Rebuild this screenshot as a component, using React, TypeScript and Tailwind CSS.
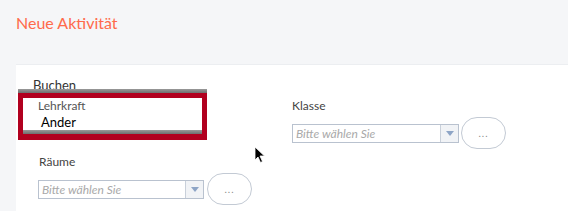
import React from "react";

function Select({ w = "w-[167px]" }: { w?: string }) {
  return (
    <div className={`flex h-[19px] ${w} border border-[#b9c2cf] bg-white`}>
      <div className="flex-1 pl-[3px] text-[12px] leading-[17px] italic text-[#a9a9a9]">Bitte wählen Sie</div>
      <div className="flex w-[18px] items-center justify-center border-l border-[#c9d0da] bg-[#f1f3f6]">
        <svg width="8" height="5" viewBox="0 0 8 5">
          <path d="M0 0 L8 0 L4 5 Z" fill="#8ea5c6" />
        </svg>
      </div>
    </div>
  );
}

function DotsButton() {
  return (
    <div className="flex h-[32px] w-[45px] items-center justify-center rounded-full border border-[#c3cad4] bg-white text-[10px] leading-none tracking-[1px] text-[#8a8a8a]">
      ...
    </div>
  );
}

export default function App() {
  return (
    <div
      className="relative h-[211px] w-[568px] overflow-hidden bg-[#f5f6f8]"
      style={{ fontFamily: "Lato, 'Open Sans', sans-serif" }}
    >
      <div className="pl-4 pt-[14px] text-[16px] leading-[18px] text-[#ff6a4b]">Neue Aktivität</div>
      <div className="ml-4 mt-[32px] flex h-[150px] border-t border-[#eceef1] bg-white">
        <div className="flex w-[276px] flex-col">
          <div className="ml-[17px] mt-[13px] h-[11px] text-[13px] leading-[15px] text-[#333]">Buchen</div>
          <div className="ml-[2px] w-[189px]">
            <div className="h-[4px] bg-gradient-to-b from-[#9a9a9a] to-[#6e6e6e]" />
            <div className="border-[5px] border-b-[6px] border-[#b1001f]">
              <div className="h-[32px] bg-white pl-[15px]">
                <div className="pt-[1px] text-[12px] leading-[14px] text-[#555]">Lehrkraft</div>
                <div className="ml-[3px] mt-[1px] text-[13px] leading-[16px] text-black">Ander</div>
              </div>
              <div className="h-[4px] bg-gradient-to-b from-[#9a9a9a] to-[#6e6e6e]" />
            </div>
          </div>
          <div className="ml-[23px] mt-[15px] text-[12px] leading-[14px] text-[#444]">Räume</div>
          <div className="ml-[22px] mt-[4px] flex items-center gap-[3px]">
            <Select w="w-[166px]" />
            <DotsButton />
          </div>
        </div>
        <div className="flex flex-col">
          <div className="mt-[34px] text-[12px] leading-[14px] text-[#444]">Klasse</div>
          <div className="mt-[4px] flex items-center gap-[2px]">
            <Select />
            <DotsButton />
          </div>
        </div>
      </div>
      <svg className="absolute left-[254px] top-[146px]" width="13" height="18" viewBox="0 0 13 18">
        <path d="M1 1 L1 14 L4 11 L6.5 16.5 L8.5 15.5 L6 10 L10.5 10 Z" fill="#000" stroke="#fff" strokeWidth="0.8" />
      </svg>
    </div>
  );
}
